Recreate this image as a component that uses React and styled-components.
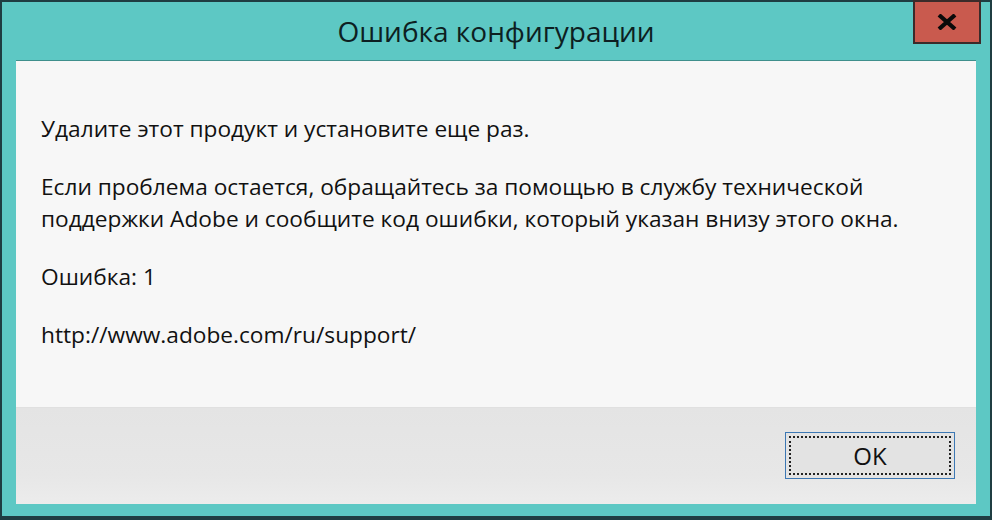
import React from "react";
import styled, { createGlobalStyle } from "styled-components";

const Global = createGlobalStyle`
  html, body { margin: 0; padding: 0; background: #5dc8c4; }
  body { font-family: "Open Sans", "Noto Sans", sans-serif; }
`;

const Window = styled.div`
  box-sizing: border-box;
  width: 992px;
  height: 520px;
  background: #5dc8c4;
  border: 2px solid #1f3d42;
  border-bottom-width: 4px;
  display: flex;
  flex-direction: column;
`;

const TitleBar = styled.div`
  height: 58px;
  display: grid;
  grid-template-columns: 1fr auto 1fr;
  align-items: start;
`;

const Title = styled.div`
  grid-column: 2;
  margin-top: 10px;
  font-size: 28px;
  line-height: 38px;
  color: #0d1f22;
`;

const CloseButton = styled.div`
  grid-column: 3;
  justify-self: end;
  margin-right: 9px;
  margin-top: -2px;
  box-sizing: border-box;
  width: 68px;
  height: 44px;
  background: #c95a4e;
  border: 2px solid #3b2b2a;
  display: flex;
  align-items: center;
  justify-content: center;
`;

const Client = styled.div`
  flex: 1;
  margin: 0 14px 12px 14px;
  border-top: 1px solid #3f8f8c;
  display: flex;
  flex-direction: column;
  background: #f7f7f7;
`;

const Content = styled.div`
  flex: 1;
  padding: 52px 25px 0 25px;
  display: flex;
  flex-direction: column;
  gap: 26px;
  font-size: 22.7px;
  line-height: 32px;
  color: #111;
`;

const Para = styled.p`
  margin: 0;
`;

const Footer = styled.div`
  height: 97px;
  box-sizing: border-box;
  background: linear-gradient(#e4e4e4, #e7e7e7 70%, #ececec);
  border-top: 1px solid #e0e0e0;
  display: flex;
  justify-content: flex-end;
  align-items: flex-start;
  padding: 24px 21px 0 0;
`;

const OkButton = styled.button`
  box-sizing: border-box;
  width: 170px;
  height: 47px;
  background: #e3e3e3;
  border: 1px solid #3d78b4;
  padding: 3px;
  font-family: inherit;
  cursor: pointer;
  display: flex;
`;

const FocusRing = styled.span`
  flex: 1;
  border: 2px dotted #222;
  display: flex;
  align-items: center;
  justify-content: center;
  font-size: 24px;
  color: #111;
`;

export default function App() {
  return (
    <>
      <Global />
      <Window>
        <TitleBar>
          <Title>Ошибка конфигурации</Title>
          <CloseButton>
            <svg width="22" height="16" viewBox="0 0 22 16">
              <path d="M3 1 L19 15 M19 1 L3 15" stroke="#0a0a0a" strokeWidth="4.2" strokeLinecap="butt" />
            </svg>
          </CloseButton>
        </TitleBar>
        <Client>
          <Content>
            <Para>Удалите этот продукт и установите еще раз.</Para>
            <Para>
              Если проблема остается, обращайтесь за помощью в службу технической
              <br />
              поддержки Adobe и сообщите код ошибки, который указан внизу этого окна.
            </Para>
            <Para>Ошибка: 1</Para>
            <Para>http://www.adobe.com/ru/support/</Para>
          </Content>
          <Footer>
            <OkButton>
              <FocusRing>OK</FocusRing>
            </OkButton>
          </Footer>
        </Client>
      </Window>
    </>
  );
}
